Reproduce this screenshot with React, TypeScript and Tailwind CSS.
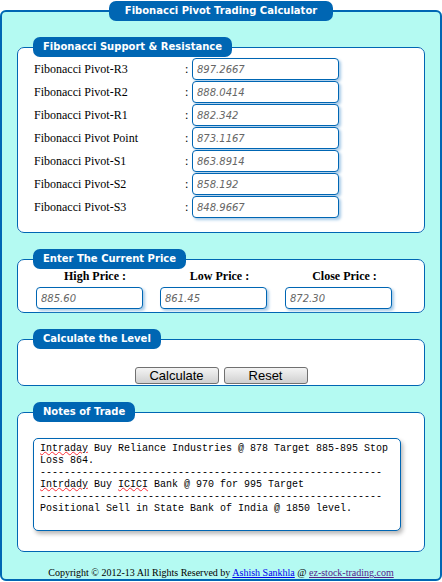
import { Fragment } from 'react';

const levels = [
  ['Fibonacci Pivot-R3', '897.2667'],
  ['Fibonacci Pivot-R2', '888.0414'],
  ['Fibonacci Pivot-R1', '882.342'],
  ['Fibonacci Pivot Point', '873.1167'],
  ['Fibonacci Pivot-S1', '863.8914'],
  ['Fibonacci Pivot-S2', '858.192'],
  ['Fibonacci Pivot-S3', '848.9667'],
];

const prices = [
  ['High Price :', '885.60'],
  ['Low Price :', '861.45'],
  ['Close Price :', '872.30'],
];

const dashes = '-'.repeat(57);

const fieldsetCls = 'mx-[15px] rounded-[7px] border border-[#0066b3] bg-white px-[15px]';
const legendCls =
  "h-5 rounded-[7px] bg-[#0066b3] px-[10px] font-['DejaVu_Sans',sans-serif] text-[10px] leading-5 font-bold text-white";
const inputCls =
  "block h-[22px] rounded-[4px] border border-[#0066b3] bg-white pl-[4px] font-['DejaVu_Sans',sans-serif] text-[10px] text-[#666] italic shadow-[2px_2px_3px_#a8cbe8] outline-none";
const buttonCls =
  "h-[17px] w-[84px] rounded-[3px] border border-[#707070] bg-gradient-to-b from-[#f4f4f4] to-[#d0d0d0] font-['Liberation_Sans',Arial,sans-serif] text-[13px] leading-[15px] text-black";

// red squiggle like the browser spell checker
function Typo({ children }: { children: string }) {
  return (
    <span className="underline decoration-red-500 decoration-wavy decoration-1 underline-offset-0">
      {children}
    </span>
  );
}

export default function App() {
  return (
    <div className="bg-white pt-px font-['Liberation_Serif','Times_New_Roman',serif] text-black">
      <fieldset className="rounded-[6px] border-2 border-[#0066b3] bg-[#b4faf2]">
        <legend className="mx-auto h-5 rounded-[7px] bg-[#0066b3] px-4 font-['DejaVu_Sans',sans-serif] text-[10px] leading-5 font-bold text-white">
          Fibonacci Pivot Trading Calculator
        </legend>

        {/* Levels */}
        <fieldset className={`mt-4 ${fieldsetCls}`}>
          <legend className={legendCls}>Fibonacci Support &amp; Resistance</legend>
          <div className="grid grid-cols-[151px_7px_147px] gap-y-px pt-px pb-[14px] pl-px text-[12px]">
            {levels.map(([label, value]) => (
              <Fragment key={label}>
                <span className="flex h-[22px] items-center">{label}</span>
                <span className="flex h-[22px] items-center">:</span>
                <input className={`w-[147px] ${inputCls}`} defaultValue={value} />
              </Fragment>
            ))}
          </div>
        </fieldset>

        {/* Prices */}
        <fieldset className={`mt-4 ${fieldsetCls}`}>
          <legend className={legendCls}>Enter The Current Price</legend>
          <div className="grid grid-cols-[124px_125px_125px] pb-[3px]">
            {prices.map(([label, value]) => (
              <div key={label}>
                <div className="h-[18px] text-center text-[12px] leading-[15px] font-bold">{label}</div>
                <input className={`ml-[3px] w-[107px] ${inputCls}`} defaultValue={value} />
              </div>
            ))}
          </div>
        </fieldset>

        {/* Buttons */}
        <fieldset className={`mt-4 ${fieldsetCls}`}>
          <legend className={legendCls}>Calculate the Level</legend>
          <div className="flex justify-center gap-[5px] pt-[18px] pb-px">
            <button className={buttonCls}>Calculate</button>
            <button className={buttonCls}>Reset</button>
          </div>
        </fieldset>

        {/* Notes */}
        <fieldset className={`mt-4 ${fieldsetCls}`}>
          <legend className={legendCls}>Notes of Trade</legend>
          <div className="pt-4 pb-5">
            <div className="h-[93px] w-[368px] rounded-[5px] border border-[#0066b3] bg-white px-[6px] pt-[4px] font-['Liberation_Mono','Courier_New',monospace] text-[10px] leading-[12px] whitespace-pre-wrap text-black shadow-[2px_3px_4px_#b8b8b8]">
              <Typo>Intraday</Typo> Buy Reliance Industries @ 878 Target 885-895 Stop Loss 864.{'\n'}
              {dashes}
              {'\n'}
              <Typo>Intrdady</Typo> Buy <Typo>ICICI</Typo> Bank @ 970 for 995 Target{'\n'}
              {dashes}
              {'\n'}
              Positional Sell in State Bank of India @ 1850 level.
            </div>
          </div>
        </fieldset>

        <p className="mt-[14px] text-center text-[10px] leading-[13px]">
          Copyright © 2012-13 All Rights Reserved by{' '}
          <a href="#" className="text-[#0000ee] underline">
            Ashish Sankhla
          </a>{' '}
          @{' '}
          <a href="#" className="text-[#551a8b] underline">
            ez-stock-trading.com
          </a>
        </p>
      </fieldset>
    </div>
  );
}
